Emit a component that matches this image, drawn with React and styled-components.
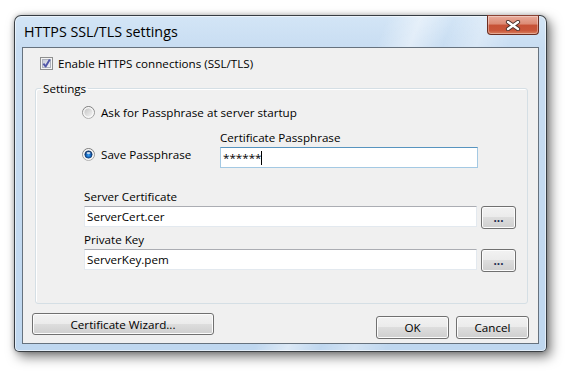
import React from "react";
import styled, { createGlobalStyle } from "styled-components";

const GlobalStyle = createGlobalStyle`
  html, body {
    margin: 0;
    padding: 0;
    background: #ffffff;
  }
  body {
    font-family: "Open Sans", "Noto Sans", sans-serif;
    font-size: 11.65px;
    color: #000;
  }
`;

const Desktop = styled.div`
  width: 565px;
  height: 372px;
  padding: 15px 0 0 14px;
  box-sizing: border-box;
  overflow: hidden;
`;

const Window = styled.div`
  width: 533px;
  height: 337px;
  box-sizing: border-box;
  display: flex;
  flex-direction: column;
  padding: 0 7px 7px 7px;
  border: 1px solid rgba(0, 0, 0, 0.72);
  border-radius: 7px 7px 5px 5px;
  background:
    linear-gradient(112deg, rgba(255,255,255,0) 56%, rgba(255,255,255,0.45) 61%, rgba(255,255,255,0) 66%, rgba(255,255,255,0.3) 71%, rgba(255,255,255,0) 76%),
    linear-gradient(180deg, #d3e5f6 0, #c8ddf2 32px, #bfd7ef 100%);
  box-shadow:
    inset 0 0 0 1px rgba(255, 255, 255, 0.55),
    4px 5px 12px rgba(0, 0, 0, 0.5),
    0 0 5px rgba(0, 0, 0, 0.25);
`;

const TitleBar = styled.div`
  height: 31px;
  display: flex;
  align-items: flex-start;
  flex-shrink: 0;
`;

const Title = styled.div`
  flex: 1;
  padding-left: 2px;
  font-size: 14.3px;
  line-height: 31px;
  color: #000;
`;

const CloseButton = styled.div`
  width: 52px;
  height: 20px;
  margin-top: -1px;
  box-sizing: border-box;
  display: flex;
  align-items: center;
  justify-content: center;
  border: 1px solid #6b2d20;
  border-top-color: #8a4234;
  border-radius: 0 0 4px 4px;
  background: linear-gradient(180deg, #e9ab9b 0, #dc8a74 45%, #c75237 50%, #c9563a 80%, #d9805f 100%);
  box-shadow: inset 0 0 0 1px rgba(255, 255, 255, 0.35);
`;

const Client = styled.div`
  flex: 1;
  display: flex;
  flex-direction: column;
  border: 1px solid #66727e;
  background: #f0f0f0;
`;

const CheckRow = styled.label`
  display: flex;
  align-items: center;
  gap: 5px;
  height: 16px;
  margin-top: 7px;
  padding-left: 17px;
`;

const GroupBox = styled.fieldset`
  height: 223px;
  box-sizing: border-box;
  min-width: 0;
  margin: 10px 10px 0 12px;
  padding: 0;
  border: 1px solid #d5dfe5;
  border-radius: 3px;
  box-shadow: inset 1px 1px 0 #fff;
`;

const Legend = styled.legend`
  margin-left: 5px;
  padding: 0 2px;
  line-height: 15px;
`;

const RadioRow = styled.label`
  display: flex;
  align-items: center;
  gap: 6px;
  height: 15px;
  width: ${(p) => (p.width ? `${p.width}px` : "auto")};
  margin-top: ${(p) => p.top || 0}px;
  margin-left: ${(p) => p.left || 0}px;
  margin-bottom: ${(p) => p.bottom || 0}px;
  flex-shrink: 0;
`;

const PassRow = styled.div`
  display: flex;
  align-items: flex-end;
  margin: 10px 0 0 46px;
`;

const PassColumn = styled.div`
  width: 258px;
  display: flex;
  flex-direction: column;
`;

const FieldLabel = styled.div`
  line-height: 15px;
  height: 15px;
`;

const Field = styled.div`
  display: flex;
  flex-direction: column;
  margin: ${(p) => p.top}px 11px 0 48px;
`;

const FieldRow = styled.div`
  display: flex;
  align-items: flex-start;
  gap: 4px;
  margin-top: 2px;
  height: 23px;
`;

const TextBox = styled.div`
  flex: 1 1 auto;
  min-width: 0;
  height: 21px;
  box-sizing: border-box;
  margin-top: ${(p) => p.top || 0}px;
  display: flex;
  align-items: center;
  padding-left: 2px;
  background: #fff;
  border: 1px solid ${(p) => (p.focused ? "#a4c9e3" : "#e3e9ef")};
  border-top-color: ${(p) => (p.focused ? "#5794bf" : "#abadb3")};
  white-space: pre;
`;

const Caret = styled.span`
  display: inline-block;
  width: 1px;
  height: 14px;
  background: #000;
`;

const Button = styled.div`
  width: ${(p) => p.width}px;
  height: ${(p) => p.height || 23}px;
  margin-top: ${(p) => p.top || 0}px;
  box-sizing: border-box;
  flex-shrink: 0;
  display: flex;
  align-items: center;
  justify-content: center;
  border: 1px solid #707070;
  border-radius: 3px;
  box-shadow: inset 0 0 0 1px #fcfcfc;
  background: linear-gradient(180deg, #f2f2f2 0, #ebebeb 49%, #dddddd 50%, #cfcfcf 100%);
  color: ${(p) => (p.dots ? "#1c2a4f" : "#000")};
  font-weight: ${(p) => (p.dots ? 700 : 400)};
  line-height: 15px;
`;

const ButtonRow = styled.div`
  display: flex;
  align-items: flex-start;
  gap: 7px;
  margin: 9px 9px 0 9px;
`;

const Spacer = styled.div`
  flex: 1;
`;

const CheckBox = () => (
  <svg width="13" height="13" viewBox="0 0 13 13">
    <defs>
      <linearGradient id="cbFill" x1="0" y1="0" x2="1" y2="1">
        <stop offset="0" stopColor="#c5c9d6" />
        <stop offset="1" stopColor="#f3f3f7" />
      </linearGradient>
    </defs>
    <rect x="0.5" y="0.5" width="12" height="12" fill="#f4f4f4" stroke="#8e8f8f" />
    <rect x="2.5" y="2.5" width="8" height="8" fill="url(#cbFill)" stroke="#aeb2bd" />
    <path d="M3.4 6.6 L5.6 9.4 L9.8 2.6" fill="none" stroke="#5056a8" strokeWidth="1.9" strokeLinejoin="round" />
  </svg>
);

const Radio = ({ checked, id }) => (
  <svg width="13" height="13" viewBox="0 0 13 13">
    <defs>
      <linearGradient id={`ring${id}`} x1="0" y1="0" x2="0" y2="1">
        <stop offset="0" stopColor="#7b7b7b" />
        <stop offset="1" stopColor="#b0b0b0" />
      </linearGradient>
      <linearGradient id={`fill${id}`} x1="0" y1="0" x2="1" y2="1">
        <stop offset="0" stopColor="#c2c2c2" />
        <stop offset="1" stopColor="#f7f7f7" />
      </linearGradient>
      <radialGradient id={`dot${id}`} cx="0.5" cy="0.6" r="0.55">
        <stop offset="0" stopColor="#3aa4f0" />
        <stop offset="0.55" stopColor="#1766c0" />
        <stop offset="1" stopColor="#0b2f66" />
      </radialGradient>
    </defs>
    <circle cx="6.5" cy="6.5" r="6" fill="#f2f2f2" stroke={`url(#ring${id})`} />
    <circle cx="6.5" cy="6.5" r="4.6" fill={`url(#fill${id})`} stroke="#ffffff" strokeOpacity="0.9" strokeWidth="0.8" />
    {checked && (
      <>
        <circle cx="6.5" cy="6.5" r="3.6" fill={`url(#dot${id})`} stroke="#123d74" strokeWidth="0.8" />
        <ellipse cx="6.5" cy="5.1" rx="2" ry="1.1" fill="#ffffff" fillOpacity="0.75" />
      </>
    )}
  </svg>
);

const CloseGlyph = () => (
  <svg width="16" height="11" viewBox="0 0 16 11">
    <path d="M3 2 L13 9 M13 2 L3 9" stroke="#4a2f2a" strokeWidth="4.2" strokeLinecap="round" />
    <path d="M3 2 L13 9 M13 2 L3 9" stroke="#ffffff" strokeWidth="2.4" strokeLinecap="round" />
  </svg>
);

export default function App() {
  return (
    <>
      <GlobalStyle />
      <Desktop>
        <Window>
          <TitleBar>
            <Title>HTTPS SSL/TLS settings</Title>
            <CloseButton>
              <CloseGlyph />
            </CloseButton>
          </TitleBar>
          <Client>
            <CheckRow>
              <CheckBox />
              Enable HTTPS connections (SSL/TLS)
            </CheckRow>
            <GroupBox>
              <Legend>Settings</Legend>
              <RadioRow top={9} left={46}>
                <Radio id="a" />
                Ask for Passphrase at server startup
              </RadioRow>
              <PassRow>
                <RadioRow width={138} bottom={6}>
                  <Radio id="b" checked />
                  Save Passphrase
                </RadioRow>
                <PassColumn>
                  <FieldLabel>Certificate Passphrase</FieldLabel>
                  <TextBox focused top={2}>
                    ******
                    <Caret />
                  </TextBox>
                </PassColumn>
              </PassRow>
              <Field top={21}>
                <FieldLabel>Server Certificate</FieldLabel>
                <FieldRow>
                  <TextBox>ServerCert.cer</TextBox>
                  <Button width={35} dots>...</Button>
                </FieldRow>
              </Field>
              <Field top={3}>
                <FieldLabel>Private Key</FieldLabel>
                <FieldRow>
                  <TextBox>ServerKey.pem</TextBox>
                  <Button width={35} dots>...</Button>
                </FieldRow>
              </Field>
            </GroupBox>
            <ButtonRow>
              <Button width={182} height={22}>Certificate Wizard...</Button>
              <Spacer />
              <Button width={73} top={3}>OK</Button>
              <Button width={73} top={3}>Cancel</Button>
            </ButtonRow>
          </Client>
        </Window>
      </Desktop>
    </>
  );
}
